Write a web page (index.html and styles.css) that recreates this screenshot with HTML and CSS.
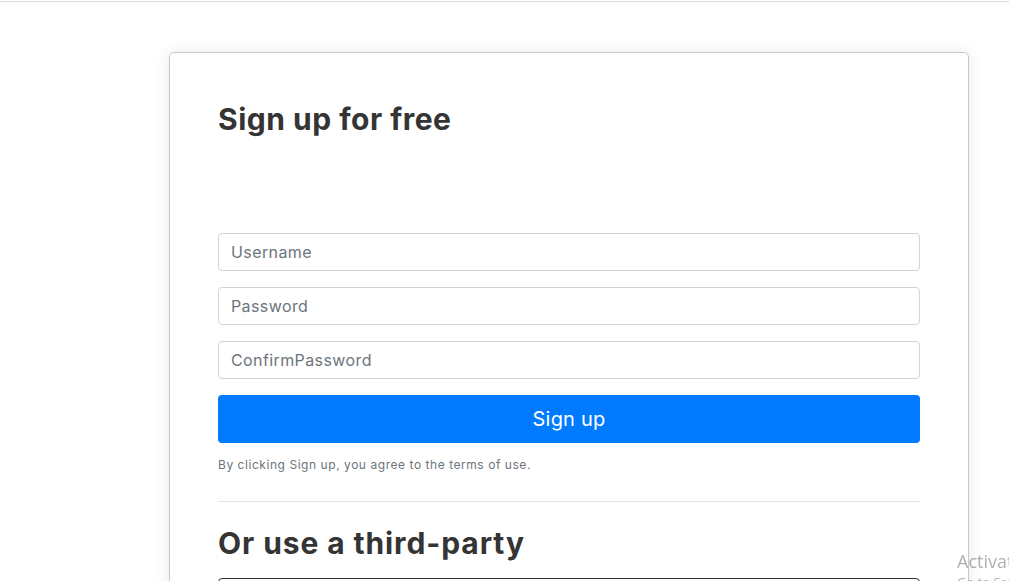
FILE: index.html
```html
<!DOCTYPE html>
<html>
<head>
<meta charset="utf-8">
<link rel="stylesheet" href="styles.css">
</head>
<body>
<div class="topline"></div>
<main class="page">
  <section class="card">
    <h1 class="title">Sign up for free</h1>
    <form class="form">
      <input class="field" type="text" placeholder="Username">
      <input class="field" type="password" placeholder="Password">
      <input class="field" type="password" placeholder="ConfirmPassword">
      <button class="btn-primary" type="button">Sign up</button>
      <p class="terms">By clicking Sign up, you agree to the terms of use.</p>
    </form>
    <hr class="divider">
    <h2 class="title title-2">Or use a third-party</h2>
    <button class="btn-outline" type="button">Sign up with Google</button>
  </section>
</main>
<div class="watermark">
  <div class="wm-1">Activate Windows</div>
  <div class="wm-2">Go to Settings to activate Windows.</div>
</div>
</body>
</html>
```
FILE: styles.css
```css
html, body {
  margin: 0;
  padding: 0;
  background: #fff;
  overflow: hidden;
  height: 100%;
}
body {
  font-family: "Inter", "Noto Sans", sans-serif;
  color: #333;
}
.topline {
  margin-top: 1px;
  height: 1px;
  background: #dcdcdc;
}
.page {
  padding-top: 50px;
  padding-left: 169px;
}
.card {
  width: 702px;
  padding: 48px;
  border: 1px solid #c8c8c8;
  border-radius: 5px;
  box-shadow: 0 0 16px rgba(0,0,0,0.09);
}
.title {
  margin: 0;
  font-size: 30px;
  font-weight: 700;
  line-height: 36px;
  color: #343434;
  letter-spacing: 0.5px;
}
.title-2 {
  letter-spacing: 0.9px;
}
.form {
  display: flex;
  flex-direction: column;
  gap: 16px;
  margin-top: 96px;
}
.field {
  box-sizing: border-box;
  height: 38px;
  width: 100%;
  border: 1px solid #ced4da;
  border-radius: 4px;
  padding: 0 12px;
  font-family: inherit;
  font-size: 16px;
  letter-spacing: 0.4px;
  color: #495057;
  outline: none;
}
.field::placeholder {
  color: #6c757d;
}
.btn-primary {
  height: 48px;
  border: none;
  border-radius: 4px;
  background: #007bff;
  color: #fff;
  font-family: inherit;
  font-size: 20px;
  letter-spacing: 0.2px;
}
.terms {
  margin: -3px 0 0;
  font-size: 12px;
  letter-spacing: 0.55px;
  color: #6c757d;
  line-height: 18px;
}
.divider {
  border: none;
  border-top: 1px solid #e5e5e5;
  margin: 27px 0 23px;
}
.btn-outline {
  margin-top: 17px;
  width: 100%;
  height: 48px;
  background: #fff;
  border: 1px solid #333;
  border-radius: 4px;
  font-family: inherit;
  font-size: 18px;
}
.watermark {
  position: fixed;
  left: 957px;
  top: 549px;
  color: rgba(120,120,120,0.6);
  font-family: "Open Sans", sans-serif;
  white-space: nowrap;
}
.wm-1 {
  font-size: 18px;
  line-height: 24px;
}
.wm-2 {
  font-size: 13px;
  line-height: 18px;
}
```
